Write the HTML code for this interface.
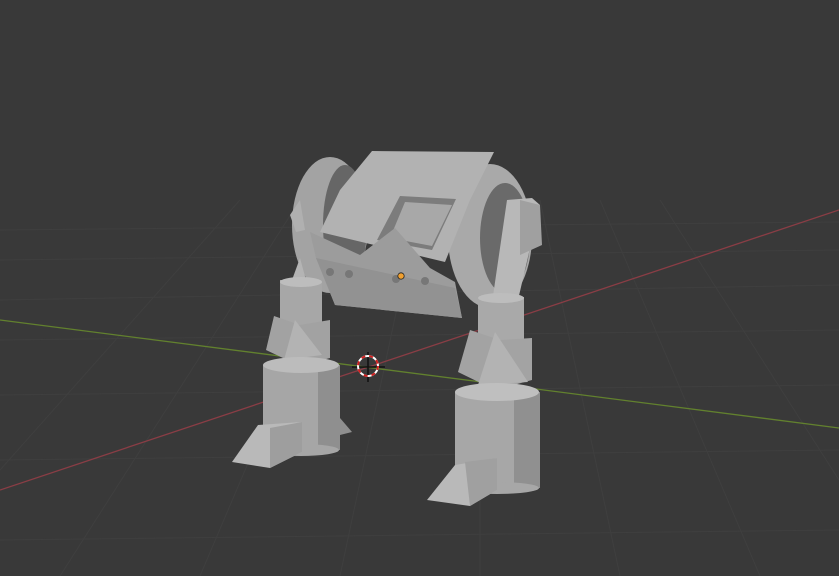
<!DOCTYPE html>
<html><head><style>html,body{margin:0;padding:0;background:#393939;overflow:hidden}svg{display:block}</style></head>
<body>
<svg width="839" height="576" viewBox="0 0 839 576" xmlns="http://www.w3.org/2000/svg">
<rect width="839" height="576" fill="#393939"/>
<g stroke="#3f3f3f" stroke-width="1" fill="none">
<path d="M0 300 L839 285 M0 340 L839 330 M0 395 L839 385 M0 460 L839 450 M0 540 L839 530 M0 260 L839 250 M0 230 L839 222"/>
<path d="M60 576 L300 200 M200 576 L360 200 M340 576 L420 200 M480 576 L480 200 M620 576 L540 200 M760 576 L600 200 M839 480 L660 200 M0 470 L240 200"/>
</g>
<line x1="0" y1="490" x2="839" y2="210" stroke="#8a3d45" stroke-width="1.3"/>
<line x1="0" y1="320" x2="839" y2="428" stroke="#62812e" stroke-width="1.3"/>
<!-- left drum -->
<ellipse cx="330" cy="225" rx="38" ry="68" fill="#a3a3a3"/>
<ellipse cx="345" cy="225" rx="22" ry="60" fill="#666"/>
<polygon points="290,215 300,200 305,230 296,232" fill="#b0b0b0"/>
<!-- right drum -->
<ellipse cx="490" cy="236" rx="42" ry="72" fill="#a9a9a9"/>
<ellipse cx="505" cy="238" rx="25" ry="55" fill="#6a6a6a"/>
<!-- box -->
<polygon points="372,151 494,152 470,200 445,262 320,232 340,190" fill="#b2b2b2"/>
<polygon points="400,196 456,199 432,250 377,240" fill="#7c7c7c"/>
<polygon points="405,202 452,205 432,246 390,238" fill="#a8a8a8"/>
<!-- front plate -->
<polygon points="310,232 360,255 395,228 430,268 455,282 462,318 335,305 316,258" fill="#9c9c9c"/>
<polygon points="316,258 455,288 462,318 335,305" fill="#929292"/>
<g fill="#777"><circle cx="330" cy="272" r="4"/><circle cx="349" cy="274" r="4"/><circle cx="396" cy="279" r="4"/><circle cx="425" cy="281" r="4"/></g>
<circle cx="401" cy="276" r="3.2" fill="#f0a030" stroke="#222" stroke-width="0.8"/>
<!-- right arm -->
<polygon points="507,200 532,198 540,205 518,300 493,296" fill="#b8b8b8"/>
<polygon points="520,200 540,205 542,245 520,255" fill="#a0a0a0"/>
<!-- left leg -->
<polygon points="292,280 300,258 306,280" fill="#b4b4b4"/>
<rect x="280" y="280" width="42" height="48" fill="#a7a7a7"/>
<ellipse cx="301" cy="282" rx="21" ry="5" fill="#bdbdbd"/>
<polygon points="266,350 274,316 300,325 330,320 330,358 300,366" fill="#a2a2a2"/>
<polygon points="295,320 322,355 284,360" fill="#b3b3b3"/>
<rect x="263" y="365" width="77" height="85" fill="#a6a6a6"/>
<rect x="318" y="365" width="22" height="85" fill="#8f8f8f"/>
<ellipse cx="301" cy="365" rx="38" ry="8" fill="#bcbcbc"/>
<ellipse cx="301" cy="450" rx="38" ry="6" fill="#a6a6a6"/>
<polygon points="340,418 352,432 340,435" fill="#8f8f8f"/>
<polygon points="232,462 258,425 302,422 302,452 270,468" fill="#b9b9b9"/>
<polygon points="270,428 302,422 302,452 270,468" fill="#9e9e9e"/>
<!-- right leg -->
<rect x="478" y="297" width="46" height="50" fill="#a9a9a9"/>
<ellipse cx="501" cy="298" rx="23" ry="5" fill="#bdbdbd"/>
<polygon points="458,372 470,330 500,340 532,338 532,380 495,390" fill="#a3a3a3"/>
<polygon points="495,332 528,382 478,385" fill="#b3b3b3"/>
<rect x="455" y="392" width="85" height="96" fill="#a7a7a7"/>
<rect x="514" y="392" width="26" height="96" fill="#909090"/>
<ellipse cx="497" cy="392" rx="42" ry="9" fill="#bfbfbf"/>
<ellipse cx="497" cy="488" rx="42" ry="6" fill="#a7a7a7"/>
<polygon points="427,500 455,465 497,458 497,490 470,506" fill="#b9b9b9"/>
<polygon points="465,462 497,458 497,490 470,506" fill="#a0a0a0"/>
<!-- 3D cursor -->
<line x1="368" y1="352" x2="368" y2="382" stroke="#111" stroke-width="1.5"/>
<line x1="352" y1="367" x2="385" y2="367" stroke="#111" stroke-width="1.5"/>
<circle cx="368" cy="366" r="10" fill="none" stroke="#fff" stroke-width="2"/>
<circle cx="368" cy="366" r="10" fill="none" stroke="#d02020" stroke-width="2" stroke-dasharray="4 4"/>
</svg>
</body></html>
